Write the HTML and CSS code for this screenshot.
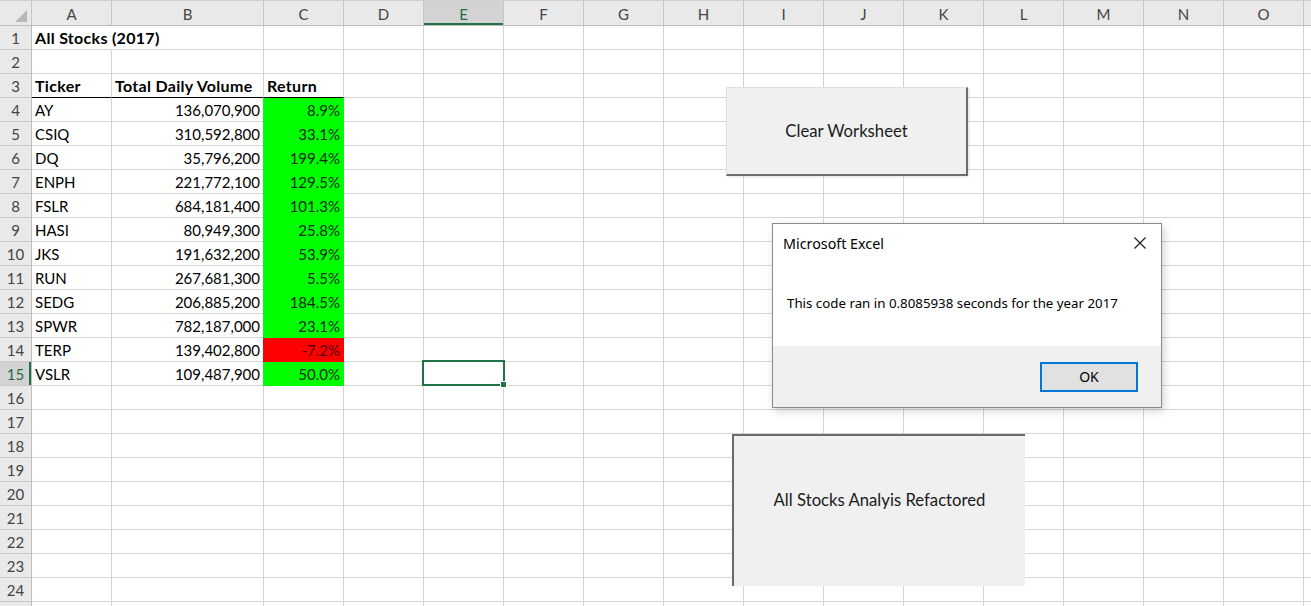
FILE: index.html
```html
<!DOCTYPE html>
<html lang="en">
<head>
<meta charset="utf-8">
<title>All Stocks (2017)</title>
<link rel="stylesheet" href="styles.css">
</head>
<body>
<div class="sheet">
  <div class="hdr">
    <div class="corner"><svg width="12" height="12" viewBox="0 0 12 12"><polygon points="12,0 12,12 0,12" fill="#b9b9b9"/></svg></div>
    <div class="ch wA">A</div>
    <div class="ch wB">B</div>
    <div class="ch wC">C</div>
    <div class="ch">D</div>
    <div class="ch sel">E</div>
    <div class="ch">F</div>
    <div class="ch">G</div>
    <div class="ch">H</div>
    <div class="ch">I</div>
    <div class="ch">J</div>
    <div class="ch">K</div>
    <div class="ch">L</div>
    <div class="ch">M</div>
    <div class="ch">N</div>
    <div class="ch">O</div>
    <div class="ch"></div>
  </div>

  <div class="row"><div class="rh">1</div><div class="c wA b spill">All Stocks (2017)</div><div class="c wB"></div><div class="c wC"></div><div class="rest"></div></div>
  <div class="row"><div class="rh">2</div><div class="c wA"></div><div class="c wB"></div><div class="c wC"></div><div class="rest"></div></div>
  <div class="row"><div class="rh">3</div><div class="c wA b under">Ticker</div><div class="c wB b under">Total Daily Volume</div><div class="c wC b under">Return</div><div class="rest"></div></div>
  <div class="row"><div class="rh">4</div><div class="c wA">AY</div><div class="c wB num">136,070,900</div><div class="c wC num pos">8.9%</div><div class="rest"></div></div>
  <div class="row"><div class="rh">5</div><div class="c wA">CSIQ</div><div class="c wB num">310,592,800</div><div class="c wC num pos">33.1%</div><div class="rest"></div></div>
  <div class="row"><div class="rh">6</div><div class="c wA">DQ</div><div class="c wB num">35,796,200</div><div class="c wC num pos">199.4%</div><div class="rest"></div></div>
  <div class="row"><div class="rh">7</div><div class="c wA">ENPH</div><div class="c wB num">221,772,100</div><div class="c wC num pos">129.5%</div><div class="rest"></div></div>
  <div class="row"><div class="rh">8</div><div class="c wA">FSLR</div><div class="c wB num">684,181,400</div><div class="c wC num pos">101.3%</div><div class="rest"></div></div>
  <div class="row"><div class="rh">9</div><div class="c wA">HASI</div><div class="c wB num">80,949,300</div><div class="c wC num pos">25.8%</div><div class="rest"></div></div>
  <div class="row"><div class="rh">10</div><div class="c wA">JKS</div><div class="c wB num">191,632,200</div><div class="c wC num pos">53.9%</div><div class="rest"></div></div>
  <div class="row"><div class="rh">11</div><div class="c wA">RUN</div><div class="c wB num">267,681,300</div><div class="c wC num pos">5.5%</div><div class="rest"></div></div>
  <div class="row"><div class="rh">12</div><div class="c wA">SEDG</div><div class="c wB num">206,885,200</div><div class="c wC num pos">184.5%</div><div class="rest"></div></div>
  <div class="row"><div class="rh">13</div><div class="c wA">SPWR</div><div class="c wB num">782,187,000</div><div class="c wC num pos">23.1%</div><div class="rest"></div></div>
  <div class="row"><div class="rh">14</div><div class="c wA">TERP</div><div class="c wB num">139,402,800</div><div class="c wC num neg">-7.2%</div><div class="rest"></div></div>
  <div class="row"><div class="rh selrow">15</div><div class="c wA">VSLR</div><div class="c wB num">109,487,900</div><div class="c wC num pos">50.0%</div><div class="rest"></div></div>
  <div class="row"><div class="rh">16</div><div class="c wA"></div><div class="c wB"></div><div class="c wC"></div><div class="rest"></div></div>
  <div class="row"><div class="rh">17</div><div class="c wA"></div><div class="c wB"></div><div class="c wC"></div><div class="rest"></div></div>
  <div class="row"><div class="rh">18</div><div class="c wA"></div><div class="c wB"></div><div class="c wC"></div><div class="rest"></div></div>
  <div class="row"><div class="rh">19</div><div class="c wA"></div><div class="c wB"></div><div class="c wC"></div><div class="rest"></div></div>
  <div class="row"><div class="rh">20</div><div class="c wA"></div><div class="c wB"></div><div class="c wC"></div><div class="rest"></div></div>
  <div class="row"><div class="rh">21</div><div class="c wA"></div><div class="c wB"></div><div class="c wC"></div><div class="rest"></div></div>
  <div class="row"><div class="rh">22</div><div class="c wA"></div><div class="c wB"></div><div class="c wC"></div><div class="rest"></div></div>
  <div class="row"><div class="rh">23</div><div class="c wA"></div><div class="c wB"></div><div class="c wC"></div><div class="rest"></div></div>
  <div class="row"><div class="rh">24</div><div class="c wA"></div><div class="c wB"></div><div class="c wC"></div><div class="rest"></div></div>
  <div class="row"><div class="rh"></div><div class="c wA"></div><div class="c wB"></div><div class="c wC"></div><div class="rest"></div></div>

  <div class="selection"><span class="handle"></span></div>

  <div class="shape btn-clear">Clear Worksheet</div>
  <div class="shape btn-run">All Stocks Analyis Refactored</div>

  <div class="dialog">
    <div class="dlg-title">
      <span>Microsoft Excel</span>
      <svg class="dlg-x" width="12" height="12" viewBox="0 0 12 12"><path d="M0.5 0.5 L11.5 11.5 M11.5 0.5 L0.5 11.5" stroke="#1a1a1a" stroke-width="1.1" fill="none"/></svg>
    </div>
    <div class="dlg-body">This code ran in 0.8085938 seconds for the year 2017</div>
    <div class="dlg-foot"><div class="dlg-ok">OK</div></div>
  </div>
</div>
</body>
</html>
```

FILE: styles.css
```css
html, body {
  margin: 0;
  padding: 0;
  background: #ffffff;
  overflow: hidden;
}

.sheet {
  position: relative;
  width: 1311px;
  height: 606px;
  overflow: hidden;
  font-family: "Lato", "Liberation Sans", sans-serif;
  font-size: 15px;
  color: #000;
}

/* column headers */
.hdr {
  display: flex;
  height: 26px;
  box-sizing: border-box;
  border-top: 1px solid #d0d0d0;
  border-bottom: 1px solid #bdbdbd;
  background: #e9e9e9;
}
.corner {
  flex: none;
  width: 32px;
  box-sizing: border-box;
  border-right: 1px solid #c6c6c6;
  display: flex;
  align-items: flex-end;
  justify-content: flex-end;
  padding: 0 4px 3px 0;
}
.corner svg { display: block; }
.ch {
  flex: none;
  width: 80px;
  box-sizing: border-box;
  border-right: 1px solid #c6c6c6;
  text-align: center;
  color: #444;
  line-height: 22px;
  padding-top: 2px;
}
.ch.sel {
  background: #d3d3d3;
  color: #1f6b43;
  box-shadow: inset 0 -2px 0 #217346;
}

/* rows */
.row {
  display: flex;
  height: 24px;
}
.rh {
  flex: none;
  width: 32px;
  box-sizing: border-box;
  background: #e9e9e9;
  border-right: 1px solid #bdbdbd;
  border-bottom: 1px solid #c9c9c9;
  color: #444;
  text-align: center;
  line-height: 22px;
  padding-top: 1px;
}
.rh.selrow {
  background: #d3d3d3;
  color: #1f6b43;
  box-shadow: inset -2px 0 0 #217346;
}
.c {
  flex: none;
  box-sizing: border-box;
  border-right: 1px solid #d4d4d4;
  border-bottom: 1px solid #d4d4d4;
  padding: 1px 3px 0 3px;
  line-height: 22px;
  white-space: nowrap;
}
.wA { width: 80px; }
.wB { width: 152px; }
.wC { width: 80px; }
.b {
  font-weight: 700;
  font-size: 16px;
  letter-spacing: 0.3px;
}
.spill { border-right-color: transparent; overflow: visible; }
.under { border-bottom-color: #000; }
.num { text-align: right; }
.pos {
  background: #00ff00;
  border-right-color: #00ff00;
  border-bottom-color: #00ff00;
  box-shadow: -1px 0 0 #00ff00;
  color: #0d2b0d;
}
.neg {
  background: #ff0000;
  border-right-color: #ff0000;
  border-bottom-color: #ff0000;
  box-shadow: -1px 0 0 #ff0000;
  color: #4a0000;
}
.rest {
  flex: 1;
  box-sizing: border-box;
  border-bottom: 1px solid #d4d4d4;
  background-image: repeating-linear-gradient(to right, transparent 0 79px, #d4d4d4 79px 80px);
}

/* active cell E15 */
.selection {
  position: absolute;
  left: 422px;
  top: 360px;
  width: 83px;
  height: 26px;
  box-sizing: border-box;
  border: 2px solid #217346;
}
.handle {
  position: absolute;
  right: -4px;
  bottom: -4px;
  width: 5px;
  height: 5px;
  background: #217346;
  border: 1px solid #fff;
}

/* form buttons (shapes) */
.shape {
  position: absolute;
  box-sizing: border-box;
  background: #f0f0f0;
  display: flex;
  align-items: center;
  justify-content: center;
  font-size: 16.7px;
  color: #1a1a1a;
}
.btn-clear {
  left: 726px;
  top: 87px;
  width: 242px;
  height: 89px;
  border-top: 1px solid #e2e2e2;
  border-left: 1px solid #e2e2e2;
  border-right: 2px solid #6d6d6d;
  border-bottom: 2px solid #6d6d6d;
  box-shadow: 1px 1px 2px rgba(0, 0, 0, 0.12);
  padding-bottom: 1px;
}
.btn-run {
  left: 732px;
  top: 434px;
  width: 293px;
  height: 152px;
  border-top: 2px solid #6a6a6a;
  border-left: 2px solid #6a6a6a;
  padding-bottom: 22px;
}

/* message box */
.dialog {
  position: absolute;
  left: 772px;
  top: 223px;
  width: 390px;
  height: 185px;
  box-sizing: border-box;
  border: 1px solid #8a8a8a;
  background: #ffffff;
  box-shadow: 2px 3px 8px rgba(0, 0, 0, 0.18);
  display: flex;
  flex-direction: column;
  font-family: "Noto Sans", "Open Sans", sans-serif;
  color: #000;
}
.dlg-title {
  height: 38px;
  flex: none;
  display: flex;
  align-items: center;
  justify-content: space-between;
  padding: 0 15px 0 10px;
  font-size: 14.3px;
}
.dlg-x { display: block; }
.dlg-body {
  height: 84px;
  flex: none;
  display: flex;
  align-items: center;
  padding-left: 14px;
  padding-bottom: 2px;
  box-sizing: border-box;
  font-size: 13.3px;
}
.dlg-foot {
  flex: 1;
  background: #f0f0f0;
  display: flex;
  align-items: center;
  justify-content: flex-end;
  padding-right: 23px;
}
.dlg-ok {
  width: 98px;
  height: 30px;
  box-sizing: border-box;
  border: 2px solid #0078d7;
  background: #e1e1e1;
  display: flex;
  align-items: center;
  justify-content: center;
  font-size: 14px;
}
```
